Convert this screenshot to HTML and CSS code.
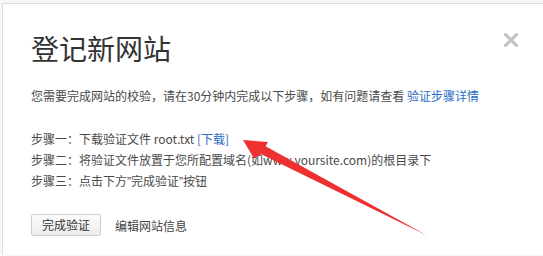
FILE: index.html
```html
<!DOCTYPE html>
<html lang="zh-CN">
<head>
<meta charset="utf-8">
<title>登记新网站</title>
<link rel="stylesheet" href="styles.css">
</head>
<body>
<div class="dialog">
  <div class="header">
    <h1 class="title">登记新网站</h1>
    <svg class="close" width="14" height="14" viewBox="0 0 14 14" aria-label="关闭">
      <path d="M1.5 1.5 L12.5 12.5 M12.5 1.5 L1.5 12.5" stroke="#c4c4c4" stroke-width="3.2" stroke-linecap="square" fill="none"/>
    </svg>
  </div>
  <p class="intro">您需要完成网站的校验，请在30分钟内完成以下步骤，如有问题请查看 <a class="link" href="#">验证步骤详情</a></p>
  <ul class="steps">
    <li>步骤一：下载验证文件 root.txt <a class="link" href="#">[下载]</a></li>
    <li>步骤二：将验证文件放置于您所配置域名(如www.yoursite.com)的根目录下</li>
    <li>步骤三：点击下方<span class="q">”</span>完成验证<span class="q">”</span>按钮</li>
  </ul>
  <div class="actions">
    <button class="btn">完成验证</button>
    <span class="edit">编辑网站信息</span>
  </div>
</div>
<svg class="arrow" width="543" height="256" viewBox="0 0 543 256">
  <polygon points="243,140 268,142 265.6,146.3 427,235.5 261.2,154.2 254,158.5" fill="#ee3030"/>
</svg>
</body>
</html>
```

FILE: styles.css
```css
html, body {
  margin: 0;
  padding: 0;
  background: #f7f7f7;
}

body {
  width: 543px;
  height: 256px;
  overflow: hidden;
  position: relative;
  font-family: "Noto Sans CJK SC", "Noto Sans", "Liberation Sans", sans-serif;
  color: #4a4a4a;
  font-size: 12px;
}

.dialog {
  margin: 3px 0 0 2px;
  border-top: 1px solid #dedede;
  border-left: 1px solid #dedede;
  background: #ffffff;
  height: 252px;
  box-sizing: border-box;
  padding: 26px 25px 0 28px;
}

.header {
  display: flex;
  justify-content: space-between;
  align-items: flex-start;
}

.title {
  margin: 0;
  font-size: 28px;
  line-height: 36px;
  font-weight: normal;
  color: #333333;
}

.close {
  margin-top: 3px;
  display: block;
}

.intro {
  margin: 20px 0 0;
  line-height: 20px;
}

.link {
  color: #2b6cc4;
  text-decoration: none;
}

.steps {
  list-style: none;
  margin: 22px 0 0;
  padding: 0;
  line-height: 21px;
}

.q {
  font-family: "Liberation Sans", sans-serif;
}

.actions {
  margin-top: 21px;
  display: flex;
  align-items: center;
  gap: 14px;
}

.btn {
  font-family: inherit;
  font-size: 12px;
  color: #333333;
  height: 22px;
  width: 70px;
  padding: 0;
  border: 1px solid #cfcfcf;
  border-radius: 2px;
  background: linear-gradient(#fcfcfc, #ececec);
  line-height: 20px;
}

.edit {
  color: #444444;
}

.arrow {
  position: absolute;
  left: 0;
  top: 0;
  pointer-events: none;
}
```
